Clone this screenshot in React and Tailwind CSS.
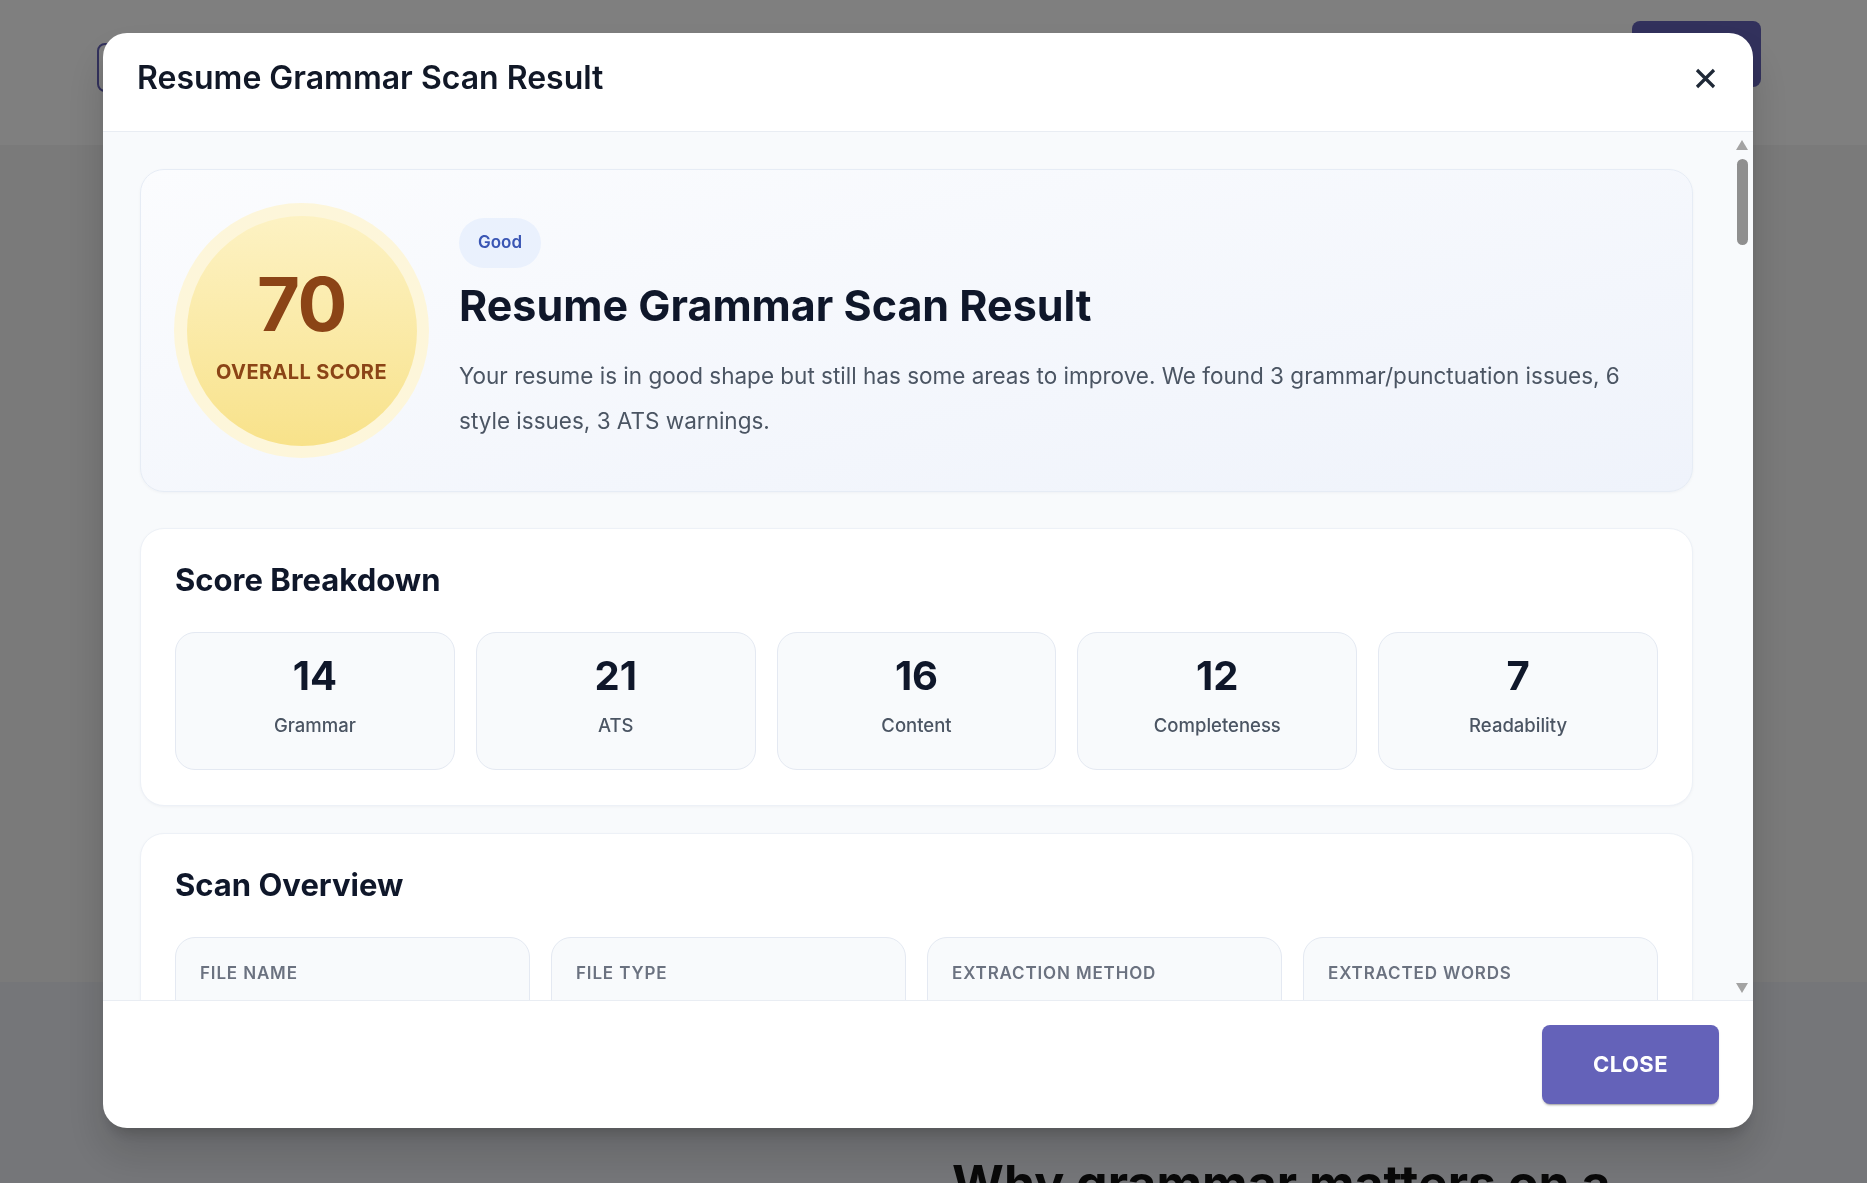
import { useState } from "react";

const breakdown = [
  { label: "Grammar", value: 14 },
  { label: "ATS", value: 21 },
  { label: "Content", value: 16 },
  { label: "Completeness", value: 12 },
  { label: "Readability", value: 7 },
];

const overview = [
  { label: "File name", value: "Jordan_Miller_Resume_2024.pdf" },
  { label: "File type", value: "PDF" },
  { label: "Extraction method", value: "pdf-text-layer" },
  { label: "Extracted words", value: "486" },
];

const grammarIssues = [
  {
    title: "Missing comma after introductory phrase",
    excerpt: "In my previous role I managed a team of five engineers.",
    fix: "In my previous role, I managed a team of five engineers.",
  },
  {
    title: "Subject-verb agreement",
    excerpt: "The reports was delivered to leadership every week.",
    fix: "The reports were delivered to leadership every week.",
  },
  {
    title: "Inconsistent end punctuation in bullets",
    excerpt: "Reduced page load time by 35%. Improved test coverage to 80%",
    fix: "Reduced page load time by 35%. Improved test coverage to 80%.",
  },
];

const styleIssues = [
  {
    title: "Weak action verb",
    excerpt: "Responsible for handling customer tickets.",
    fix: "Resolved 40+ customer tickets per week with a 98% satisfaction rate.",
  },
  {
    title: "Passive voice",
    excerpt: "The migration was completed by our team ahead of schedule.",
    fix: "Led the migration and delivered it two weeks ahead of schedule.",
  },
  {
    title: "Repeated word",
    excerpt: "Developed features, developed APIs and developed dashboards.",
    fix: "Built features, designed APIs and shipped analytics dashboards.",
  },
  {
    title: "Filler phrase",
    excerpt: "Was able to successfully increase sign-ups.",
    fix: "Increased sign-ups by 22% in one quarter.",
  },
  {
    title: "Overly long bullet",
    excerpt: "Worked closely with designers, product managers and QA to plan, build, test and release...",
    fix: "Split into two bullets and lead each with a measurable result.",
  },
  {
    title: "Inconsistent tense",
    excerpt: "Manage the release calendar and coordinated deployments.",
    fix: "Managed the release calendar and coordinated deployments.",
  },
];

const atsWarnings = [
  {
    title: "Header contains contact details",
    excerpt: "Some applicant tracking systems skip text placed in document headers.",
    fix: "Move your email and phone number into the main body of the resume.",
  },
  {
    title: "Non-standard section title",
    excerpt: "\"Where I've Been\" may not be recognised as a work history section.",
    fix: "Rename the section to \"Work Experience\".",
  },
  {
    title: "Table layout detected",
    excerpt: "Skills are placed in a two-column table.",
    fix: "Use a simple comma-separated list or single-column bullets.",
  },
];

const SectionCard = ({ title, children, className = "" }) => (
  <div
    className={`rounded-[24px] border border-[#edf1f7] bg-white px-[34px] pt-[32px] pb-[35px] shadow-[0_1px_3px_rgba(15,23,42,0.04)] ${className}`}
  >
    <h3 className="mb-[34px] text-[31px] font-bold leading-[1.2] text-[#0f172a]">{title}</h3>
    {children}
  </div>
);

const IssueList = ({ items, tone }) => (
  <div className="flex flex-col gap-4">
    {items.map((item, i) => (
      <div key={i} className="rounded-[20px] border border-[#e4e9f2] bg-[#f8fafc] p-6">
        <div className="flex items-center gap-3">
          <span className={`rounded-full px-3 py-1 text-[14px] font-semibold ${tone}`}>#{i + 1}</span>
          <span className="text-[20px] font-semibold text-[#111827]">{item.title}</span>
        </div>
        <p className="mt-3 text-[18px] leading-[30px] text-[#6b7280]">“{item.excerpt}”</p>
        <p className="mt-2 text-[18px] leading-[30px] text-[#047857]">Suggestion: {item.fix}</p>
      </div>
    ))}
  </div>
);

// classic scrollbar with arrows, drawn beside the scrolling body
const ScrollTrack = () => (
  <div className="mr-[3px] flex w-[16px] shrink-0 flex-col items-center pb-[7px] pt-[8px]">
    <svg width="12" height="10" viewBox="0 0 12 10">
      <path d="M6 0 12 10H0Z" fill="#a3a3a3" />
    </svg>
    <div className="mt-[9px] h-[86px] w-[11px] rounded-full bg-[#8f8f8f]" />
    <div className="flex-1" />
    <svg width="12" height="10" viewBox="0 0 12 10">
      <path d="M0 0H12L6 10Z" fill="#a3a3a3" />
    </svg>
  </div>
);

const ScanResultDialog = ({ onClose }) => (
  <div className="fixed inset-0 bg-black/50 pl-[103px] pt-[33px]">
    <div className="flex h-[1095px] w-[1650px] flex-col overflow-hidden rounded-[24px] bg-white shadow-[0_11px_15px_-7px_rgba(0,0,0,0.2),0_24px_38px_3px_rgba(0,0,0,0.14)]">
      {/* Header */}
      <div className="flex h-[99px] shrink-0 items-center justify-between border-b border-[#e9edf3] pb-[7px] pl-[34px] pr-[37px]">
        <h2 className="text-[32px] font-semibold leading-[1.2] text-[#111827]">Resume Grammar Scan Result</h2>
        <button onClick={onClose} className="flex h-[21px] w-[21px] items-center justify-center text-[#1f2937]">
          <svg width="21" height="21" viewBox="0 0 21 21" fill="none" stroke="currentColor" strokeWidth="3.2">
            <path d="M2 2 19 19M19 2 2 19" />
          </svg>
        </button>
      </div>

      {/* Body */}
      <div className="flex min-h-0 flex-1 bg-[#f8fafc]">
        <div className="min-w-0 flex-1 overflow-y-auto pb-10 pl-[37px] pr-[41px] pt-[37px] [scrollbar-width:none]">
          {/* Hero */}
          <div className="mb-[36px] flex items-center gap-[30px] rounded-[24px] border border-[#e6ecf5] bg-gradient-to-br from-[#fbfcfe] to-[#eff3fb] p-[33px] shadow-[0_1px_3px_rgba(15,23,42,0.04)]">
            <div className="h-[255px] w-[255px] shrink-0 rounded-full bg-[#fdf6da] p-[12.5px]">
              <div className="flex h-full w-full flex-col items-center justify-center rounded-full bg-gradient-to-b from-[#fdf2c3] to-[#f8e28a] pb-[11px]">
                <span className="text-[74px] font-bold leading-none tracking-[-0.02em] text-[#8b4416]">70</span>
                <span className="mt-[19px] text-[20px] font-bold leading-[1.2] tracking-[0.02em] text-[#8b4416]">
                  OVERALL SCORE
                </span>
              </div>
            </div>
            <div className="min-w-0 flex-1">
              <span className="inline-flex h-[50px] items-center rounded-full bg-[#eaf1fd] px-[19px] text-[17px] font-semibold text-[#3a56b4]">
                Good
              </span>
              <h1 className="mt-[12px] text-[43px] font-bold leading-[1.2] text-[#0f172a]">Resume Grammar Scan Result</h1>
              <p className="mt-[21px] text-[22.5px] leading-[45px] text-[#4b5563]">
                Your resume is in good shape but still has some areas to improve. We found 3 grammar/punctuation issues, 6
                style issues, 3 ATS warnings.
              </p>
            </div>
          </div>

          {/* Score Breakdown */}
          <SectionCard title="Score Breakdown">
            <div className="grid grid-cols-5 gap-[21px]">
              {breakdown.map((b) => (
                <div key={b.label} className="rounded-[20px] border border-[#e4e9f2] bg-[#f8fafc] pb-[30px] pt-[19px] text-center">
                  <div className="text-[40px] font-bold leading-[1.2] text-[#0f172a]">{b.value}</div>
                  <div className="mt-[12px] text-[18.5px] font-medium leading-[27px] text-[#4b5563]">{b.label}</div>
                </div>
              ))}
            </div>
          </SectionCard>

          {/* Scan Overview */}
          <SectionCard title="Scan Overview" className="mt-[27px]">
            <div className="grid grid-cols-4 gap-[21px]">
              {overview.map((o) => (
                <div key={o.label} className="rounded-[20px] border border-[#e4e9f2] bg-[#f8fafc] p-[24px]">
                  <div className="text-[17px] font-semibold uppercase leading-[1.4] tracking-[0.05em] text-[#6b7280]">
                    {o.label}
                  </div>
                  <div className="mt-3 break-all text-[20px] font-semibold text-[#111827]">{o.value}</div>
                </div>
              ))}
            </div>
          </SectionCard>

          <SectionCard title="Grammar & Punctuation Issues" className="mt-[28px]">
            <IssueList items={grammarIssues} tone="bg-[#fee2e2] text-[#b91c1c]" />
          </SectionCard>

          <SectionCard title="Style Issues" className="mt-[28px]">
            <IssueList items={styleIssues} tone="bg-[#fef3c7] text-[#92400e]" />
          </SectionCard>

          <SectionCard title="ATS Warnings" className="mt-[28px]">
            <IssueList items={atsWarnings} tone="bg-[#e0e7ff] text-[#3730a3]" />
          </SectionCard>
        </div>
        <ScrollTrack />
      </div>

      {/* Footer */}
      <div className="flex h-[128px] shrink-0 items-center justify-end border-t border-[#e9edf3] pr-[34px]">
        <button
          onClick={onClose}
          className="h-[79px] w-[177px] rounded-[8px] bg-[#6462b9] text-[22px] font-bold tracking-[0.02em] text-white shadow-[0_3px_1px_-2px_rgba(0,0,0,0.2),0_2px_2px_0_rgba(0,0,0,0.14)]"
        >
          CLOSE
        </button>
      </div>
    </div>
  </div>
);

export default function App() {
  const [open, setOpen] = useState(true);

  return (
    <div className="h-[1183px] overflow-hidden bg-[#f4f4f5] font-[Inter,sans-serif]">
      <header className="flex h-[145px] items-start justify-between bg-white pl-[97px] pr-[106px] pt-[21px]">
        <button className="mt-[22px] h-[49px] w-[220px] rounded-[8px] border-2 border-[#6462b9] text-[18px] font-semibold text-[#6462b9]">
          Back to tools
        </button>
        <button className="h-[66px] w-[129px] rounded-[8px] bg-[#6462b9] text-[20px] font-bold text-white">SCAN</button>
      </header>
      <main className="h-[837px]" />
      <section className="bg-[#ebedf3] pt-[171px]">
        <h2 className="ml-[952px] w-[760px] text-[50px] font-bold leading-[1.2] text-[#111111]">
          Why grammar matters on a resume
        </h2>
      </section>
      {open && <ScanResultDialog onClose={() => setOpen(false)} />}
    </div>
  );
}
